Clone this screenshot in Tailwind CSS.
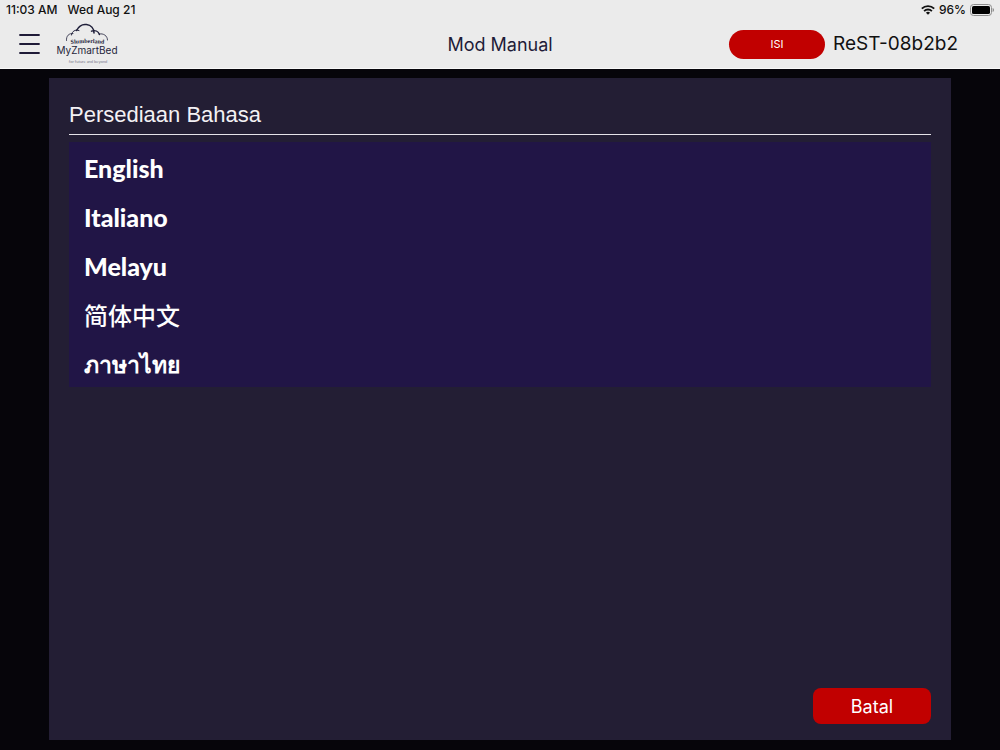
<!DOCTYPE html>
<html lang="ms">
  <head>
    <meta charset="UTF-8" />
    <meta name="viewport" content="width=device-width, initial-scale=1.0" />
    <title>MyZmartBed</title>
    <script src="https://cdn.jsdelivr.net/npm/@tailwindcss/browser@4"></script>
  </head>
  <body class="min-h-screen flex flex-col bg-[#06050a] font-['Inter','Liberation_Sans',sans-serif]">
    <!-- Status bar -->
    <div class="flex h-5 items-center justify-between bg-[#ebebeb] pl-[6px] pr-[6px] text-[12px] font-medium leading-5 text-[#111]">
      <div class="flex gap-[10px]">
        <span>11:03 AM</span>
        <span>Wed Aug 21</span>
      </div>
      <div class="flex items-center gap-1">
        <svg class="h-[10px] w-[14px]" viewBox="0 0 14 10" fill="none" stroke="#111" stroke-width="1.8">
          <path d="M.8 3.7a8.8 8.8 0 0 1 12.4 0" />
          <path d="M3.1 6.1a5.5 5.5 0 0 1 7.8 0" />
          <path d="M7 9.8 4.9 7.7a3 3 0 0 1 4.2 0z" fill="#111" stroke="none" />
        </svg>
        <span>96%</span>
        <svg class="h-3 w-6" viewBox="0 0 24 12">
          <rect x=".5" y=".5" width="21" height="11" rx="3" fill="none" stroke="#8d8d8d" />
          <rect x="2" y="2" width="18" height="8" rx="1.6" fill="#000" />
          <path d="M22.600 4v4c.9-.4 1.400-1.100 1.400-2s-.5-1.600-1.400-2z" fill="#8d8d8d" />
        </svg>
      </div>
    </div>

    <!-- Header -->
    <header class="grid h-[49px] grid-cols-[1fr_auto_1fr] items-center border-b border-[#f8f8f8] bg-[#ebebeb]">
      <div class="flex items-center gap-4 pl-[19px]">
        <button type="button" aria-label="Menu">
          <svg class="h-5 w-[21px]" viewBox="0 0 21 20" stroke="#1f1b38" stroke-width="1.8" stroke-linecap="round">
            <path d="M1 1h19M1 10h19M1 19h19" />
          </svg>
        </button>
        <a href="#" aria-label="MyZmartBed">
          <svg class="h-[42px] w-16" viewBox="0 0 64 42" fill="#1f1f3a">
            <g fill="none" stroke="#1f1f3a" stroke-linecap="round">
              <path d="M10.500 17.500c-.5-4.500 2.500-7.500 6.500-7" stroke-width=".8" />
              <path d="M15.500 12c.5-4 4-5.800 7.500-4.500" stroke-width="1" />
              <path d="M20.500 7.500C23 2.500 27 1 30.500 1.500c4.500.6 7.500 4 7.500 8.500" stroke-width="1.500" />
              <path d="M35.500 8.200c3.500-1.200 6.800.2 8 3.300" stroke-width="1.400" />
              <path d="M43 11c4.500-1 8.500 1.800 8.500 6" stroke-width=".8" />
            </g>
            <path id="arc" d="M8 22Q31.500 18 55 22" fill="none" />
            <text text-anchor="middle" class="font-['Liberation_Sans_Narrow','Liberation_Serif',serif] text-[6px] font-bold"><textPath href="#arc" startOffset="50%">Slumberland</textPath></text>
            <text x="31" y="31" text-anchor="middle" class="font-['Inter',sans-serif] text-[10px]">MyZmartBed</text>
            <text x="32" y="40" text-anchor="middle" fill="#77778a" class="font-['Lato',sans-serif] text-[4px]">for future and beyond</text>
          </svg>
        </a>
      </div>
      <h1 class="text-[18px] text-[#1f1b38]">Mod Manual</h1>
      <div class="flex items-center justify-end gap-2 pr-[42px]">
        <button type="button" class="h-[29px] w-24 rounded-full bg-[#c10000] text-[11px] text-white">ISI</button>
        <span class="text-[19px] text-[#111]">ReST-08b2b2</span>
      </div>
    </header>

    <!-- Language settings -->
    <main class="mx-[49px] mt-[9px] mb-[10px] flex grow flex-col bg-[#231e34] px-5 pt-[21px] pb-4">
      <h2 class="border-b border-[#e5e3e8] pb-[3px] font-['Liberation_Sans',sans-serif] text-[22px] leading-8 text-[#f3f1f4]">Persediaan Bahasa</h2>
      <ul class="mt-[7px] bg-[#211546] font-['Lato','Noto_Sans_CJK_SC','Noto_Sans',sans-serif] text-[25px] font-black text-white">
        <li><button type="button" class="block h-[49px] w-full px-[15px] pt-1 text-left">English</button></li>
        <li><button type="button" class="block h-[49px] w-full px-[15px] pt-1 text-left">Italiano</button></li>
        <li><button type="button" class="block h-[49px] w-full px-[15px] pt-1 text-left">Melayu</button></li>
        <li><button type="button" lang="zh-CN" class="block h-[49px] w-full px-[15px] pt-1 text-left text-[24px] font-medium">简体中文</button></li>
        <li><button type="button" lang="th" class="block h-[49px] w-full px-[15px] pt-1 text-left text-[23px] font-bold">ภาษาไทย</button></li>
      </ul>
      <button type="button" class="mt-auto h-9 w-[118px] self-end rounded-lg bg-[#c10000] text-[18px] text-white">Batal</button>
    </main>
  </body>
</html>
